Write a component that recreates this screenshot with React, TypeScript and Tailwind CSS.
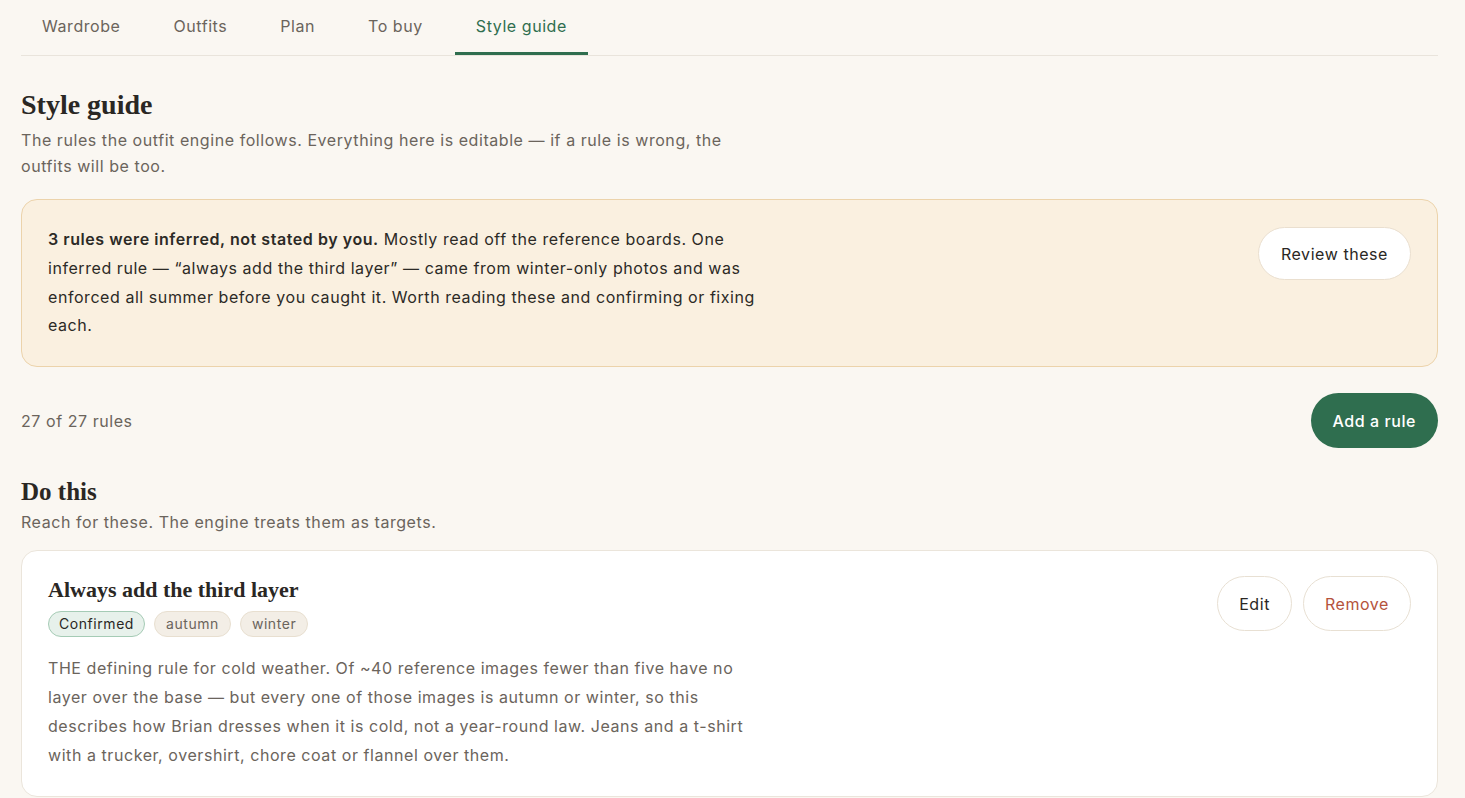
import React, { useState } from "react";

const TABS = ["Wardrobe", "Outfits", "Plan", "To buy", "Style guide"];

type Rule = {
  title: string;
  status: string;
  seasons: string[];
  body: string;
};

const DO_RULES: Rule[] = [
  {
    title: "Always add the third layer",
    status: "Confirmed",
    seasons: ["autumn", "winter"],
    body: "THE defining rule for cold weather. Of ~40 reference images fewer than five have no layer over the base — but every one of those images is autumn or winter, so this describes how Brian dresses when it is cold, not a year-round law. Jeans and a t-shirt with a trucker, overshirt, chore coat or flannel over them.",
  },
];

const serif = "font-['Liberation_Serif',serif] tracking-normal";

const Tabs = ({ active, onChange }: { active: string; onChange: (t: string) => void }) => (
  <div className="flex gap-[11px] border-b border-[#e9e4dc]">
    {TABS.map((tab) => {
      const isActive = tab === active;
      return (
        <button
          key={tab}
          onClick={() => onChange(tab)}
          className={`px-[21px] pt-[14px] pb-[14px] text-base leading-6 border-b-[3px] ${
            isActive ? "text-[#2f6e4f] border-[#2f6e4f]" : "text-[#6b645c] border-transparent"
          }`}
        >
          {tab}
        </button>
      );
    })}
  </div>
);

const RuleCard = ({ rule }: { rule: Rule }) => (
  <div className="flex items-start justify-between rounded-2xl border border-[#ebe5db] bg-white px-[26px] pt-[25px] pb-[26px]">
    <div className="max-w-[715px]">
      <div className={`${serif} text-[22px] font-bold leading-7 text-[#2a2724]`}>{rule.title}</div>
      <div className="mt-[7px] flex gap-[9px]">
        <span className="rounded-full border border-[#a5cbb5] bg-[#e7f1eb] px-[10px] text-sm leading-6 text-[#2a2724]">
          {rule.status}
        </span>
        {rule.seasons.map((s) => (
          <span
            key={s}
            className="rounded-full border border-[#e8dfd0] bg-[#f3eee6] px-[11px] text-sm leading-6 text-[#6b645c]"
          >
            {s}
          </span>
        ))}
      </div>
      <p className="mt-[17px] text-base leading-[29px] text-[#6b645c]">{rule.body}</p>
    </div>
    <div className="flex gap-[11px]">
      <button className="h-[55px] rounded-full border border-[#e8e0d3] bg-white px-[21px] text-base text-[#2a2724]">
        Edit
      </button>
      <button className="h-[55px] rounded-full border border-[#e8e0d3] bg-white px-[21px] text-base text-[#b5533c]">
        Remove
      </button>
    </div>
  </div>
);

export default function App() {
  const [tab, setTab] = useState("Style guide");

  return (
    <div className="min-h-screen bg-[#faf7f2] pl-[21px] pr-[27px] font-['Inter',sans-serif] tracking-[0.035em] text-[#2a2724]">
      <Tabs active={tab} onChange={setTab} />

      <div className="pt-[33px]">
        <h1 className={`${serif} text-[28px] font-bold leading-8`}>Style guide</h1>
        <p className="mt-[6px] max-w-[715px] text-base leading-[26px] text-[#6b645c]">
          The rules the outfit engine follows. Everything here is editable — if a rule is wrong, the
          outfits will be too.
        </p>
      </div>

      <div className="mt-[20px] flex items-start justify-between rounded-2xl border border-[#ecd3ab] bg-[#faf0e0] px-[26px] pt-[25px] pb-[26px]">
        <p className="max-w-[715px] text-base leading-[28.8px] text-[#2c2a26]">
          <span className="font-semibold">3 rules were inferred, not stated by you.</span> Mostly read
          off the reference boards. One inferred rule — “always add the third layer” — came from
          winter-only photos and was enforced all summer before you caught it. Worth reading these and
          confirming or fixing each.
        </p>
        <button className="mt-[2px] h-[53px] shrink-0 rounded-full border border-[#eadfcf] bg-white px-[22px] text-base text-[#2a2724]">
          Review these
        </button>
      </div>

      <div className="mt-[26px] flex items-center justify-between">
        <span className="text-base text-[#6b645c]">27 of 27 rules</span>
        <button className="h-[55px] rounded-full bg-[#2f6e4f] px-[22px] text-base font-medium text-white">
          Add a rule
        </button>
      </div>

      <div className="mt-[28px]">
        <h2 className={`${serif} text-[25px] font-bold leading-8`}>Do this</h2>
        <p className="mt-[2px] text-base leading-6 text-[#6b645c]">
          Reach for these. The engine treats them as targets.
        </p>
      </div>

      <div className="mt-[16px] flex flex-col gap-4">
        {DO_RULES.map((rule) => (
          <RuleCard key={rule.title} rule={rule} />
        ))}
      </div>
    </div>
  );
}
